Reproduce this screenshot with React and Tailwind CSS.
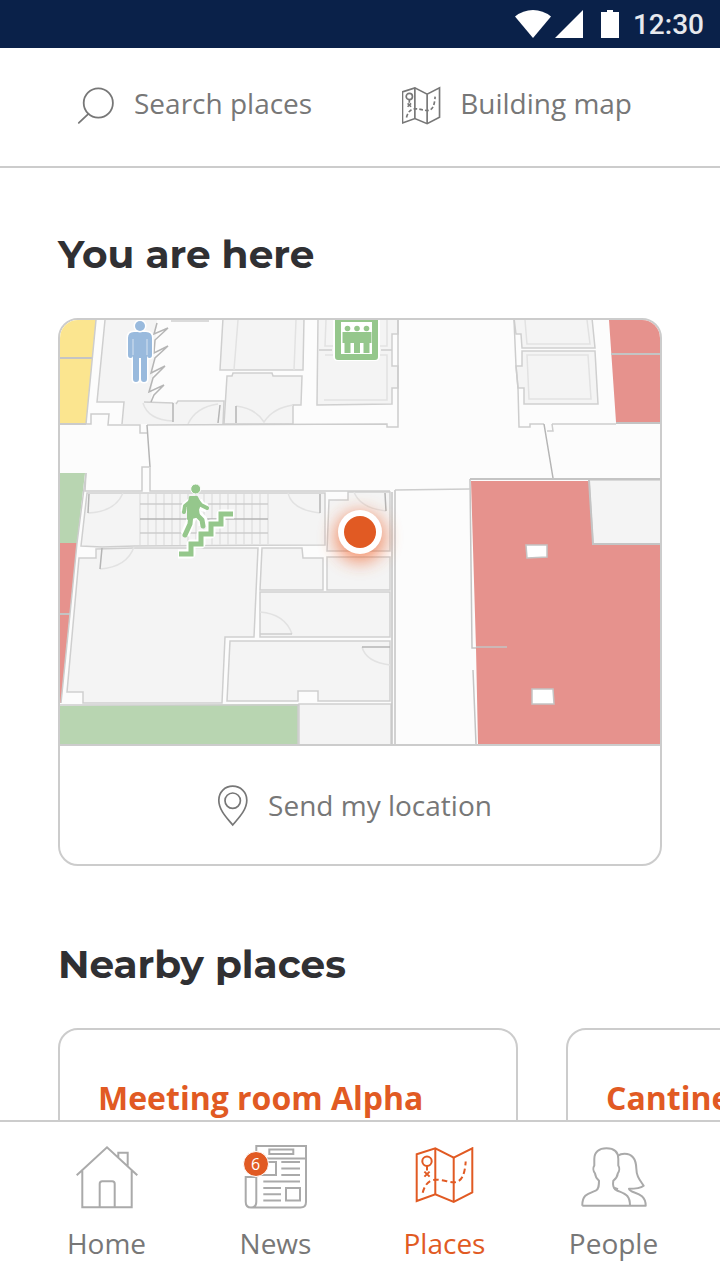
import React from "react";

function SearchIcon() {
  return (
    <svg className="h-11 w-10" viewBox="0 -5 40 44" fill="none" stroke="currentColor" strokeWidth="1.8" strokeLinecap="round" aria-hidden="true">
      <circle cx="22.3" cy="17" r="14.6" />
      <path d="M12.4 27.8 2.8 36.8" />
    </svg>
  );
}

function MapIcon({ className, viewBox, strokeWidth = 2 }) {
  return (
    <svg className={className} viewBox={viewBox} fill="none" stroke="currentColor" strokeWidth={strokeWidth} aria-hidden="true">
      <path d="M2.7 9.3 21.3 3.3 39.7 12.7 58.3 3.3V47.3L39.7 57 21.3 49.3 2.7 56Z" />
      <path d="M21.3 3.3V49.3M39.7 12.7V57" />
      <circle cx="13" cy="16.2" r="4.7" />
      <path d="M13 21V25.5M10.4 26.6l5.2 5M15.6 26.6l-5.2 5" />
      <path d="M8.7 47.7C10.3 41.5 13 37.5 17 35.6 24 33 32 36.8 39.7 37.3 48 37.5 50.8 29 51.7 16.5" strokeDasharray="5.5 3.2" />
    </svg>
  );
}

function PinIcon() {
  return (
    <svg className="h-11 w-9" viewBox="0 -1 36 44" fill="none" stroke="currentColor" strokeWidth="1.7" aria-hidden="true">
      <path d="M16.7 41C11 34 2.8 26 2.8 16.2 2.8 8 9 2.2 16.7 2.2S30.8 8 30.8 16.2C30.8 26 22.5 34 16.7 41Z" />
      <circle cx="16.7" cy="16.7" r="7.7" />
    </svg>
  );
}

function HomeIcon() {
  return (
    <svg className="h-16 w-16" viewBox="0 0 64 64" fill="none" stroke="currentColor" strokeWidth="2" aria-hidden="true">
      <path d="M1.7 30.3 32 2.3 62.3 30.3M7.3 25.7V62.3H56.7V25.7M43.3 12.3V7.7H52.7V20.7" />
      <path d="M24.7 62.3V38.8Q24.7 36.3 27.2 36.3H37.2Q39.7 36.3 39.7 38.8V62.3" />
    </svg>
  );
}

function NewsIcon() {
  return (
    <svg className="h-16 w-16" viewBox="0 2 64 64" fill="none" stroke="currentColor" strokeWidth="2" aria-hidden="true">
      <path d="M12.3 8V3H62V59Q62 64.5 56.5 64.5H7Q1.7 64.5 1.7 58.7V34H12.3V58.7Q12.3 64.5 7 64.5" />
      <path d="M12.3 15.5H62M25.3 6.5H49.3V11H25.3ZM16 19H32V32H16M37.3 19H56M37.3 25.5H56M37.3 32H56M19.3 38.5H56M19.3 45H37M19.3 51.3H37M19.3 57.6H37M42 45H56V57.6H42Z" />
    </svg>
  );
}

function PeopleIcon() {
  return (
    <svg className="h-16 w-17" viewBox="0 0 68 64" fill="none" stroke="currentColor" strokeWidth="2" strokeLinejoin="round" aria-hidden="true">
      <path d="M2.3 60.7C2 49 9 48.5 15.7 45.7 19 44 19 40 19 35.7 16.5 33.5 15.2 31.500 15 28.3 13 26 13 22.500 14.300 20.500V14C14.300 7 19 3.300 26.500 3.300S38.300 7 38.300 14V20.500C39.600 22.500 39.600 26 37.800 28.300 37.500 31.500 36 33.500 33.300 35.700 32.500 40 33.300 44 37 45.500 45 49 50 49.500 50 60.700" />
      <path d="M38.300 10.500C40 9 42 8.700 44.500 8.700 52 8.700 56 13.500 56.300 23.300 56.500 32 60 35 63.700 40.700 60 43.500 55 43.800 49 43.800 50 49 65.700 46 65.700 60.700H2.300M33.500 42.500 38 44.200" />
    </svg>
  );
}

function StatusBar() {
  return (
    <div className="flex h-12 shrink-0 items-center justify-end bg-[#0a2149] pr-4 text-[28px] leading-8 text-[#e7e9ed]">
      <svg className="h-12 w-30" viewBox="0 0 120 48" fill="#fff" aria-hidden="true">
        <path d="M14 16.500Q22 10 32 10T50 16.500L32 38Z" />
        <path d="M54 38 82 10V38Z" />
        <path d="M100 12H106V10H112V12H118V38H100Z" />
      </svg>
      <time className="ml-3 pt-0.5 font-['Roboto',sans-serif] font-medium">12:30</time>
    </div>
  );
}

const stairTreads = Array.from({ length: 17 }, (_, i) => 80 + i * 8);

function LiftPerson({ x }) {
  return (
    <g>
      <circle cx={x} cy="8.500" r="2.800" />
      <path d={`M${x - 5} 12h10v11h-2v10h-6v-10h-2z`} />
    </g>
  );
}

function FloorPlan() {
  return (
    <svg className="block w-full" viewBox="0 0 600 424" role="img" aria-label="Floor plan with your position">
      <defs>
        <filter id="glow" x="-100%" y="-100%" width="300%" height="300%">
          <feGaussianBlur stdDeviation="9" />
        </filter>
      </defs>
      <rect width="600" height="424" fill="#fcfcfc" />

      <g fill="#f4f4f4" stroke="#cfcfcf" strokeWidth="1.500">
        <path stroke="none" d="M45 0 37 82H64L62 104H164V82H91L97 0Z" />
        <path fill="none" d="M45 0 37 82H64L62 104M111 1H149M84 82 113 83M116 84 118 81H164L163 104" />
        <path d="M163 -2 160 50H243L244 -2ZM173 53H212L213 56H242L241 85H233V104H164L167 56H172Z" />
        <path d="M258 -2 257 85 332 84V68H338V46H332V14H338V-2Z" />
        <path d="M462 28H535L532 -2H454L456 14H461ZM462 31H535L538 84H464V68H458L456 46H462Z" />
        <path d="M27 173H265V225L75 226 42 227 21 226Z" />
        <path d="M19 238H36V229L73 228H198L194 317H165L162 383H23V372H7Z" />
        <path d="M202 228H242L243 238H263V270H200ZM267 237H330V270H267ZM200 272H330V317H200ZM170 321H330V381H258V371H238V381H167Z" />
        <path d="M239 384H331V426H239ZM269 180H288V172H330V231H267Z" />
        <path d="M529 160H602V224H533Z" />
      </g>

      <g fill="none" stroke="#e2e2e2" strokeWidth="1.500">
        <path d="M178 0 174 50M236 0 234 50M266 0 265 26H327V0M265 35H327V80H264M465 0 467 24H530L527 0M467 35H528L531 79H469Z" />
        <path d="M83 83Q88 100 113 101M128 104Q136 87 158 84M176 86Q195 88 204 102Q213 88 233 85" />
        <path d="M28 193Q55 192 63 173M260 193Q232 190 228 173M40 249Q67 247 74 227M200 292Q225 294 232 314M302 327Q306 342 330 345M326 191Q300 188 294 172" />
        {stairTreads.map((x) => (
          <path key={x} d={`M${x} 174V225`} />
        ))}
      </g>

      <g fill="#fbe58f">
        <path d="M0 0H36L26 104H0Z" />
      </g>
      <g fill="#b8d5b1">
        <path d="M0 153H25L17 223H0ZM0 386 238 384V424H0Z" />
      </g>
      <g fill="#e6928d">
        <path d="M17 223 10 293 1 383H0V223ZM549 0H600V102H556ZM411 161H529L533 224H600V424H418L416 328Z" />
      </g>

      <g fill="none" stroke="#c4c4c4" strokeWidth="2">
        <path d="M0 38H32M0 294H10M551 34H600M556 103H600M410 159H600M529 160 533 224H600M0 104H26" />
        <path d="M410 159 412 328H416M413 350 416 424M416 327H447M332 172V424M335 170V424" strokeWidth="1.500" />
      </g>
      <g fill="none" stroke="#cdcdcd" strokeWidth="1.500">
        <path d="M36 0 26 104M0 104H31V94H49L48 105H80V113H88M89 147H82V171H25L26 153M90 147V171H330M87 105 327 104V107H338V0" />
        <path d="M454 0 456 46 458 68 459 107H470V104H484M492 104 493 111H487M492 104H556M335 170 410 169M26 153 17 223 10 294 1 383" />
        <path d="M259 30H272M321 30H332M0 385H239M238 384V424" />
        <path d="M80 184H208M80 213H208M200 314H232" />
      </g>
      <g fill="none" stroke="#b5b5b5" strokeWidth="1.500">
        <path d="M97 3 94 14 108 8 95 20 94 33 108 26 95 38 91 53 105 46 93 58 89 72 104 65 94 75 91 82" />
        <path d="M113 83V102M160 85 158 103M176 86V103M29 174 28 193M260 174V193M42 228 40 249M325 173 326 191M302 327H330M87 105 90 147M484 104 493 158M80 199H208" />
      </g>
      <g fill="#fff" stroke="#c4c4c4" strokeWidth="1.500">
        <path d="M466 225H487V237L467 238ZM472 369H493L494 384H472Z" />
      </g>

      <g fill="#99badd" stroke="#fff" strokeWidth="3" paintOrder="stroke" strokeLinejoin="round">
        <path d="M74 12H86Q92 12 92 18V35Q92 38 89.500 38T87 35V59Q87 62 84 62T81 59V38H79V59Q79 62 76 62T73 59V35Q73 38 70.500 38T68 35V18Q68 12 74 12Z" />
        <circle cx="80" cy="6" r="5" />
      </g>
      <path d="M73 19V35M87 19V35" stroke="#d5e2f0" strokeWidth="1" />

      <path d="M276 -3H317V36Q317 38 315 38H278Q276 38 276 36Z" fill="#fff" stroke="#fff" strokeWidth="6" />
      <path d="M278 -4H315V37H278Z" fill="#fff" stroke="#95c78c" strokeWidth="6" strokeLinejoin="round" />
      <path d="M278 0.500H315" stroke="#95c78c" strokeWidth="3" />
      <g fill="#95c78c">
        <LiftPerson x={287.500} />
        <LiftPerson x={297} />
        <LiftPerson x={306.500} />
      </g>

      <g fill="none" strokeLinejoin="round">
        <path d="M174 194H161V204H151V214H141V224H131V234H118M133 181V195L125 215M133 181 126 186 125 192M138 181 141 186 147 188M137 194 143 200 143 206" stroke="#fff" strokeWidth="9" />
        <path d="M173 194H161V204H151V214H141V224H131V234H119" stroke="#95c78c" strokeWidth="5" strokeLinejoin="miter" />
        <path d="M131 181 125 186 124 192M137 180 141 185 147 188" stroke="#95c78c" strokeWidth="4" strokeLinecap="round" />
        <path d="M131 194 130 204 125 215M136 194 142 200 143 206" stroke="#95c78c" strokeWidth="5" strokeLinecap="round" />
        <path d="M130 177H137L140 184 138 190 139 196 128 199V187Z" fill="#95c78c" stroke="#95c78c" strokeWidth="2" />
        <circle cx="135.700" cy="169" r="5" fill="#95c78c" stroke="#fff" strokeWidth="1" />
      </g>

      <circle cx="300" cy="217" r="25" fill="#f0652f" opacity="0.700" filter="url(#glow)" />
      <circle cx="300" cy="212" r="22" fill="#fff" />
      <circle cx="300" cy="212" r="16" fill="#e15a23" />
    </svg>
  );
}

function PlaceCard({ name }) {
  return (
    <article className="w-[460px] shrink-0 rounded-[20px] border-2 border-[#ccc] px-[38px] pt-12 pb-24">
      <h3 className="text-[32px] leading-10 font-bold text-[#e15a23]">{name}</h3>
    </article>
  );
}

function NavItem({ label, icon, active, badge }) {
  return (
    <a
      href={`#${label.toLowerCase()}`}
      aria-current={active ? "page" : undefined}
      className={`flex flex-1 flex-col items-center gap-[14px] ${active ? "text-[#e15a23]" : "text-[#777]"}`}
    >
      <span className={`relative flex h-16 items-center ${active ? "text-[#e15a23]" : "text-[#aaa]"}`}>
        {icon}
        {badge && (
          <span className="absolute top-1.5 -left-px flex h-[26px] w-[26px] items-center justify-center rounded-full border border-white bg-[#e15a23] text-base leading-5 text-white">
            {badge}
          </span>
        )}
      </span>
      <span className="text-[28px] leading-10">{label}</span>
    </a>
  );
}

export default function App() {
  return (
    <div className="flex h-screen flex-col bg-white font-['Open_Sans','Noto_Sans',sans-serif] text-[#777]">
      <StatusBar />
      <header className="flex h-30 shrink-0 items-center justify-between border-b-2 border-[#ccc] pr-[88px] pb-2 pl-[76px] text-[28px] leading-10">
        <button type="button" className="flex items-center gap-[18px]">
          <SearchIcon />
          Search places
        </button>
        <button type="button" className="flex items-center gap-[18px]">
          <MapIcon className="h-11 w-10" viewBox="2 -7 60 66" strokeWidth={2.5} />
          Building map
        </button>
      </header>

      <main className="min-h-0 flex-1 overflow-y-auto [scrollbar-width:none]">
        <section className="px-[58px] pt-[62px]">
          <h2 className="font-['Montserrat','Inter',sans-serif] text-[39px] leading-12 font-bold text-[#303033]">You are here</h2>
          <div className="mt-10 overflow-hidden rounded-[20px] border-2 border-[#ccc]">
            <FloorPlan />
            <button type="button" className="flex h-30 w-full items-center justify-center gap-4 border-t-2 border-[#ccc] pr-3 text-[28px] leading-10">
              <PinIcon />
              Send my location
            </button>
          </div>
        </section>

        <section className="pt-[74px]">
          <h2 className="px-[58px] font-['Montserrat','Inter',sans-serif] text-[39px] leading-12 font-bold text-[#303033]">Nearby places</h2>
          <div className="mt-10 flex gap-12 overflow-x-auto px-[58px] [scrollbar-width:none]">
            <PlaceCard name="Meeting room Alpha" />
            <PlaceCard name="Cantine" />
          </div>
        </section>
      </main>

      <nav className="flex h-40 shrink-0 border-t-2 border-[#ccc] px-[22px] pt-[23px]">
        <NavItem label="Home" icon={<HomeIcon />} />
        <NavItem label="News" icon={<NewsIcon />} badge="6" />
        <NavItem label="Places" icon={<MapIcon className="h-15 w-15" viewBox="1 2 60 60" />} active />
        <NavItem label="People" icon={<PeopleIcon />} />
      </nav>
    </div>
  );
}
